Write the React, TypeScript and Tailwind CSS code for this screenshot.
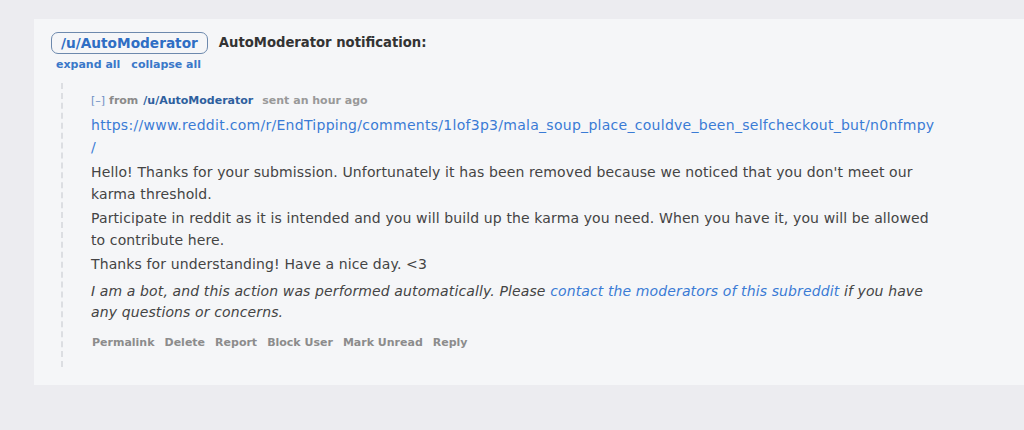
import React from 'react';

const url =
  'https://www.reddit.com/r/EndTipping/comments/1lof3p3/mala_soup_place_couldve_been_selfcheckout_but/n0nfmpy';

const actions = ['Permalink', 'Delete', 'Report', 'Block User', 'Mark Unread', 'Reply'];

export default function App() {
  return (
    <div
      className="h-[430px] w-[1024px] overflow-hidden bg-[#ececf0] pt-[19px] pl-[34px]"
      style={{ fontFamily: '"DejaVu Sans", Verdana, sans-serif' }}
    >
      <div className="h-[366px] bg-[#f5f6f8] pt-[13px] pl-[17px]">
        {/* header */}
        <div className="flex items-center gap-[11px]">
          <span className="rounded-[7px] border-[1.5px] border-[#6d89ad] px-[9px] py-[1px] text-[13.7px] font-bold leading-[18px] text-[#2f6ec4]">
            /u/AutoModerator
          </span>
          <span className="text-[13.2px] font-bold text-[#333]">AutoModerator notification:</span>
        </div>
        <div className="mt-[4px] flex gap-[11px] pl-[5px] text-[11px] font-bold leading-[14px] text-[#3a78c9]">
          <span>expand all</span>
          <span>collapse all</span>
        </div>

        {/* message */}
        <div className="mt-[11px] ml-[10px] flex">
          <div className="h-[284px] w-0 border-l-[2px] border-dashed border-[#dcdee2]" />
          <div className="w-[872px] pl-[28px] pt-[11px]">
            <div className="flex items-baseline text-[11px] leading-[14px]">
              <span className="text-[#6c8fc4]">[–]</span>
              <span className="ml-[4px] font-bold text-[#8a8a8a]">from</span>
              <span className="ml-[5px] font-bold text-[#2e5f9e]">/u/AutoModerator</span>
              <span className="ml-[9px] font-bold text-[#999]">sent an hour ago</span>
            </div>
            <div className="mt-[6px] text-[14px] leading-[22px] tracking-[0.12px] text-[#444]">
              <p className="tracking-[0.28px] text-[#3a7bd5]">
                {url}
                <br />/
              </p>
              <p className="mt-[3px]">
                Hello! Thanks for your submission. Unfortunately it has been removed because we noticed
                that you don't meet our karma threshold.
              </p>
              <p className="mt-[2px]">
                Participate in reddit as it is intended and you will build up the karma you need. When you
                have it, you will be allowed to contribute here.
              </p>
              <p className="mt-[2px]">Thanks for understanding! Have a nice day. &lt;3</p>
              <p className="mt-[6px] leading-[21px] italic">
                I am a bot, and this action was performed automatically. Please{' '}
                <span className="text-[#3a7bd5]">contact the moderators of this subreddit</span> if you
                have any questions or concerns.
              </p>
            </div>
            <div className="mt-[13px] flex gap-[10px] pl-[1px] text-[11px] font-bold leading-[14px] text-[#8c8c8c]">
              {actions.map((a) => (
                <span key={a}>{a}</span>
              ))}
            </div>
          </div>
        </div>
      </div>
    </div>
  );
}
